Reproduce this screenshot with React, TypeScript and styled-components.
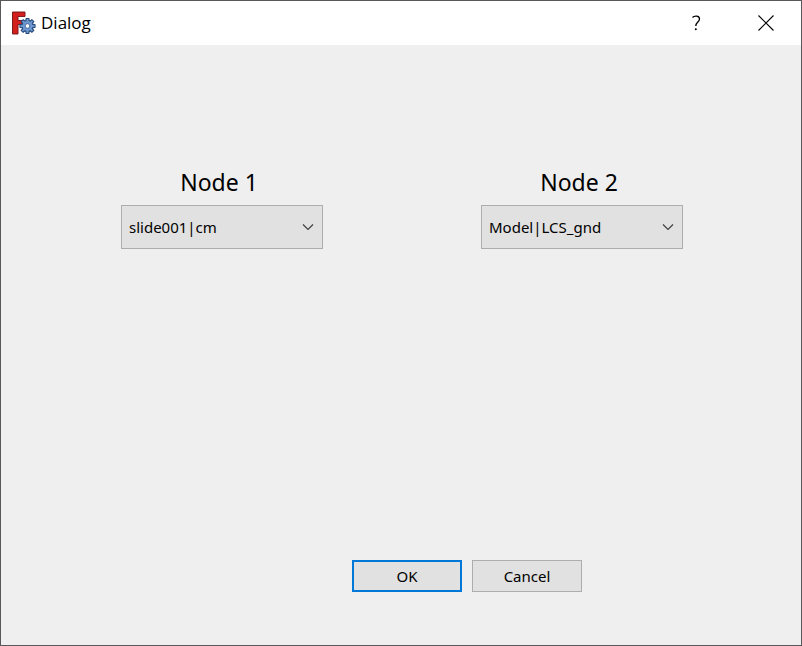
import React from "react";
import styled, { createGlobalStyle } from "styled-components";

const GlobalStyle = createGlobalStyle`
  * { box-sizing: border-box; }
  body { margin: 0; background: #efefef; }
  button, select { font: inherit; color: inherit; }
`;

const Window = styled.main`
  display: flex;
  flex-direction: column;
  min-height: 100vh;
  border: 1px solid #58585a;
  background: #efefef;
  color: #000;
  font-family: "Noto Sans", "Open Sans", sans-serif;
  font-size: 15px;
`;

const TitleBar = styled.header`
  display: flex;
  align-items: center;
  height: 44px;
  padding-left: 10px;
  background: #fff;
`;

const Title = styled.h1`
  flex: 1;
  margin: 0 0 0 5px;
  font-family: "Open Sans", sans-serif;
  font-size: 17px;
  font-weight: 400;
  line-height: 24px;
`;

const TitleButton = styled.button`
  display: grid;
  place-items: center;
  width: 70px;
  height: 44px;
  padding: 0;
  border: 0;
  background: transparent;
`;

const Form = styled.form`
  display: flex;
  flex: 1;
  flex-direction: column;
  justify-content: space-between;
  align-items: center;
  padding: 120px 0 53px 2px;
`;

const Fields = styled.div`
  display: flex;
  flex-wrap: wrap;
  justify-content: center;
  gap: 32px 158px;
`;

const Field = styled.div`
  display: flex;
  flex-direction: column;
  width: 202px;
`;

const Label = styled.label`
  align-self: center;
  height: 40px;
  padding-right: 6px;
  font-size: 23px;
  line-height: 34px;
`;

const SelectFrame = styled.div`
  display: grid;
  align-items: center;

  > * { grid-area: 1 / 1; }
  > svg { justify-self: end; margin-right: 9px; pointer-events: none; }
`;

const Select = styled.select`
  appearance: none;
  width: 100%;
  height: 44px;
  padding: 0 28px 0 7px;
  border: 1px solid #adadad;
  border-radius: 0;
  background: #e1e1e1;
`;

const Actions = styled.div`
  display: flex;
  gap: 10px;
  padding-left: 130px;
`;

const ActionButton = styled.button<{ $primary?: boolean }>`
  width: 110px;
  height: 32px;
  padding: 0;
  border: ${(p) => (p.$primary ? "2px solid #0078d7" : "1px solid #adadad")};
  background: #e1e1e1;
  line-height: 24px;
`;

const teeth = [0, 45, 90, 135, 180, 225, 270, 315];

function AppIcon() {
  return (
    <svg width="25" height="26" viewBox="0 0 25 26" aria-hidden="true">
      <path d="M1.5 2H14V6.5H7V10.5H11V14.5H7V24H1.5Z" fill="#d3201f" stroke="#6d1114" strokeWidth=".9" />
      <g transform="translate(16.5 16)">
        <g fill="#729fcf" stroke="#264a7c" strokeWidth="1.4">
          {teeth.map((angle) => (
            <path key={angle} d="M-1.6 -5L-1.2 -7.4H1.2L1.6 -5Z" transform={`rotate(${angle})`} />
          ))}
          <circle r="5.2" />
        </g>
        <g fill="#6c98cf">
          {teeth.map((angle) => (
            <path key={angle} d="M-1.2 -4L-.8 -7H.8L1.2 -4Z" transform={`rotate(${angle})`} />
          ))}
          <circle r="4.9" />
        </g>
        <circle r="2.3" fill="#fff" stroke="#345b90" strokeWidth=".8" />
      </g>
    </svg>
  );
}

function NodeField({ id, label, value }: { id: string; label: string; value: string }) {
  return (
    <Field>
      <Label htmlFor={id}>{label}</Label>
      <SelectFrame>
        <Select id={id} defaultValue={value}>
          <option>slide001|cm</option>
          <option>Model|LCS_gnd</option>
        </Select>
        <svg width="12" height="8" viewBox="0 0 12 8" aria-hidden="true">
          <path d="M1 1.5L6 6.5L11 1.5" fill="none" stroke="#404040" strokeWidth="1.2" />
        </svg>
      </SelectFrame>
    </Field>
  );
}

export default function App() {
  return (
    <>
      <GlobalStyle />
      <Window>
        <TitleBar>
          <AppIcon />
          <Title>Dialog</Title>
          <TitleButton type="button" aria-label="Help">
            <svg width="10" height="16" viewBox="0 0 10 16" aria-hidden="true">
              <path d="M1.5 2.5C3 .8 8.5 .2 8.5 4C8.5 7 4.8 7.2 4.8 11" fill="none" stroke="#000" strokeWidth="1.3" />
              <circle cx="4.8" cy="14.3" r="1" />
            </svg>
          </TitleButton>
          <TitleButton type="button" aria-label="Close">
            <svg width="16" height="16" viewBox="0 0 16 16" aria-hidden="true">
              <path d="M.5 .5L15.5 15.5M15.5 .5L.5 15.5" stroke="#000" strokeWidth="1.1" />
            </svg>
          </TitleButton>
        </TitleBar>
        <Form onSubmit={(event) => event.preventDefault()}>
          <Fields>
            <NodeField id="node-1" label="Node 1" value="slide001|cm" />
            <NodeField id="node-2" label="Node 2" value="Model|LCS_gnd" />
          </Fields>
          <Actions>
            <ActionButton type="submit" $primary>OK</ActionButton>
            <ActionButton type="button">Cancel</ActionButton>
          </Actions>
        </Form>
      </Window>
    </>
  );
}
